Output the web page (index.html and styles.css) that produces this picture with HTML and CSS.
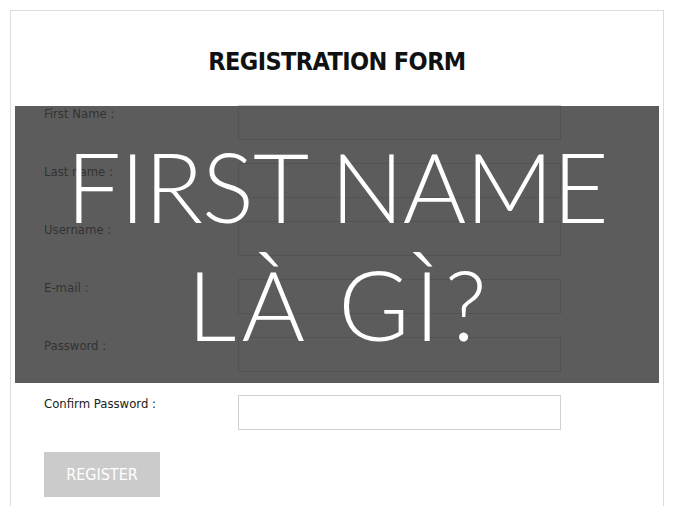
FILE: index.html
```html
<!DOCTYPE html>
<html lang="vi">
<head>
    <meta charset="UTF-8">
    <meta name="viewport" content="width=device-width, initial-scale=1.0">
    <title>First Name là gì?</title>
    <link rel="stylesheet" href="styles.css">
</head>
<body>

    <div class="card">
        <h1 class="title">REGISTRATION FORM</h1>

        <form class="form">
            <div class="row"><label>First Name :</label><input type="text"></div>
            <div class="row"><label>Last name :</label><input type="text"></div>
            <div class="row"><label>Username :</label><input type="text"></div>
            <div class="row"><label>E-mail :</label><input type="text"></div>
            <div class="row"><label>Password :</label><input type="password"></div>
            <div class="row"><label>Confirm Password :</label><input type="password"></div>
            <button type="button" class="register">REGISTER</button>
        </form>

        <div class="overlay">
            <div class="overlay-text">
                <span class="line">FIRST NAME</span>
                <span class="line wide">LÀ GÌ?</span>
            </div>
        </div>
    </div>

</body>
</html>
```

FILE: styles.css
```css
body { margin: 0; background: white; font-family: "DejaVu Sans", sans-serif; font-stretch: condensed; color: #333; overflow: hidden; }
.card { position: relative; box-sizing: border-box; width: 654px; height: 520px; margin: 10px 0 0 10px; padding: 36px 33px 0; border: 1px solid #dcdcdc; border-bottom: none; }
.title { margin: 0; font-size: 25px; line-height: 30px; font-weight: bold; text-align: center; color: #111; letter-spacing: -0.6px; }
.form { display: flex; flex-direction: column; gap: 23px; margin-top: 28px; }
.row { display: grid; grid-template-columns: 194px 323px; }
.row label { font-size: 13px; line-height: 18px; color: #222; }
.row input { box-sizing: border-box; height: 35px; border: 1px solid #d0d0d0; margin: 0; padding: 0 8px; background: white; }
.register { width: 116px; height: 45px; margin-top: -1px; border: none; background: #cbcbcb; color: white; font-family: inherit; font-stretch: condensed; font-size: 16px; }
.overlay { position: absolute; top: 95px; left: 4px; width: 644px; height: 277px; background: rgba(54, 54, 54, 0.81); display: flex; justify-content: center; align-items: center; }
.overlay-text { font-family: Lato, sans-serif; font-weight: 300; font-stretch: normal; font-size: 97px; line-height: 118px; color: white; text-align: center; letter-spacing: -1px; }
.line { display: block; }
.line.wide { letter-spacing: 5px; padding-left: 5px; }
```
